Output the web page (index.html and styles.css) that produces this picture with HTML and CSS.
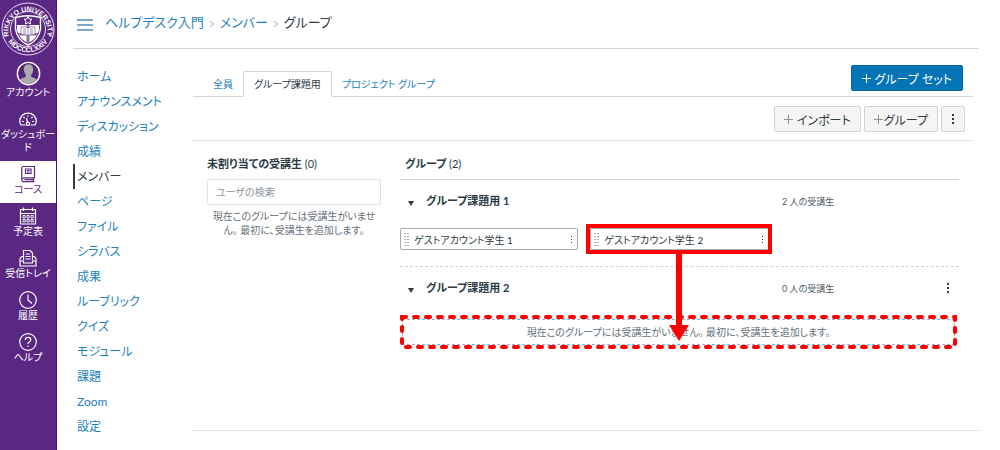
FILE: index.html
```html
<!DOCTYPE html>
<html lang="ja">
<head>
  <meta charset="UTF-8">
  <title>グループ</title>
  <link rel="stylesheet" href="styles.css">
</head>
<body>

  <!-- Global navigation -->
  <nav class="rail">
    <a href="#" class="logo" aria-label="Rikkyo University">
      <svg width="54" height="54" viewBox="0 0 54 54">
        <circle cx="27" cy="27" r="26" fill="none" stroke="#e6dcee" stroke-width="1"/>
        <circle cx="27" cy="27" r="17.500" fill="#5a2782" stroke="#e6dcee" stroke-width="1"/>
        <defs>
          <path id="arc-top" d="M7.500 32 A19.700 19.700 0 1 1 46.500 32"/>
          <path id="arc-bottom" d="M4.500 34.500 A24 24 0 0 0 49.500 34.500"/>
        </defs>
        <text class="logo-text"><textPath href="#arc-top" startOffset="50%">RIKKYO UNIVERSITY</textPath></text>
        <text class="logo-text"><textPath href="#arc-bottom" startOffset="50%">MDCCCLXXIV</textPath></text>
        <circle cx="5" cy="34" r="0.800" fill="#fff"/>
        <circle cx="49" cy="34" r="0.800" fill="#fff"/>
        <path d="M14.500 15.500 Q27 12 39.500 15.500 V27 Q38 38 27 43 Q16 38 14.500 27 Z" fill="#5a2782" stroke="#fff" stroke-width="1.400"/>
        <path d="M16 23 H38 V28 Q36.500 36.500 27 41 Q17.500 36.500 16 28 Z" fill="#fff"/>
        <path d="M25.500 23 H28.500 V41 H25.500 Z M17 31 H37 V33.500 H17 Z" fill="#8f6dab"/>
        <path d="M27 14.500 L28.200 17 L31 17.300 L29 19.200 L29.500 22 L27 20.600 L24.500 22 L25 19.200 L23 17.300 L25.800 17 Z" fill="none" stroke="#fff" stroke-width="1"/>
        <path d="M20 25 Q24 24 27 26 Q30 24 34 25 V32.500 Q30 32 27 33.500 Q24 32 20 32.500 Z" fill="#fff" stroke="#7d559d" stroke-width="0.700"/>
        <path d="M27 26 V33 M22 27 H25 M22 29 H25 M29 27 H32 M29 29 H32 M22 31 H25 M29 31 H32" stroke="#7d559d" stroke-width="0.700"/>
      </svg>
    </a>
    <a href="#" class="rail-item">
      <svg width="25" height="25" viewBox="0 0 26 26">
        <circle cx="13" cy="13" r="11.600" fill="#55247c" stroke="#fff" stroke-width="1.500"/>
        <path d="M13 3.500 C17 3.500 18.300 7 17.800 10 C17.500 12.500 16 14 15.500 15.500 C16 17.500 20.500 17 21.500 19.500 Q18 23.800 13 23.800 Q8 23.800 4.500 19.500 C5.500 17 10 17.500 10.500 15.500 C10 14 8.500 12.500 8.200 10 C7.700 7 9 3.500 13 3.500 Z" fill="#ababab"/>
      </svg>
      <span>アカウント</span>
    </a>
    <a href="#" class="rail-item">
      <svg width="18" height="18" viewBox="0 0 18 18" fill="none" stroke="currentColor" stroke-width="1.200">
        <path d="M2 15 Q0.700 13.500 0.700 11 A8.300 7.800 0 0 1 17.300 11 Q17.300 13.500 16 15 H11.500 M2 15 H6.500"/>
        <path d="M7.500 8 L8.600 12.300"/>
        <circle cx="9" cy="13.800" r="1.600"/>
        <path d="M3 11.500 H4.800 M13.200 11.500 H15 M4.500 7 L5.700 8.200 M13.500 7 L12.300 8.200 M9 5.200 V6.500"/>
      </svg>
      <span>ダッシュボード</span>
    </a>
    <a href="#" class="rail-item active">
      <svg width="18" height="18" viewBox="0 0 18 18" fill="none" stroke="currentColor" stroke-width="1.200">
        <path d="M15.500 12.800 V1.500 H4.500 Q2.800 1.500 2.800 3.200 V14.700 Q2.800 16.600 4.600 16.600 H15.500 M15.500 12.800 H4.600 Q2.800 12.800 2.800 14.700 M14.500 13 V16.500 M5.500 14.700 H14"/>
        <path d="M6.500 4 H12 V8.500 H6.500 Z M8 5.500 H10.500 M8 7 H10.500"/>
      </svg>
      <span>コース</span>
    </a>
    <a href="#" class="rail-item">
      <svg width="18" height="18" viewBox="0 0 18 18" fill="none" stroke="currentColor" stroke-width="1.200">
        <path d="M1.500 2.500 H16.500 V17 H1.500 Z M1.500 6.500 H16.500 M4.500 0.500 V4 M13.500 0.500 V4"/>
        <path d="M4 8.500 H6.200 V11 H4 Z M8 8.500 H10.200 V11 H8 Z M12 8.500 H14.200 V11 H12 Z M4 12.500 H6.200 V15 H4 Z M8 12.500 H10.200 V15 H8 Z M12 12.500 H14.200 V15 H12 Z" stroke-width="0.900"/>
      </svg>
      <span>予定表</span>
    </a>
    <a href="#" class="rail-item">
      <svg width="18" height="18" viewBox="0 0 18 18" fill="none" stroke="currentColor" stroke-width="1.200">
        <path d="M4.500 11 V1.500 H11 L13.500 4 V11 M6.500 5 H11 M6.500 7.500 H11.500 M6.500 10 H11.500"/>
        <path d="M4.500 7.500 H2.500 L1 10 V17 H17 V10 L15.500 7.500 H13.500 M1 12 H4.500 V14 H13.500 V12 H17"/>
      </svg>
      <span>受信トレイ</span>
    </a>
    <a href="#" class="rail-item">
      <svg width="18" height="18" viewBox="0 0 18 18" fill="none" stroke="currentColor" stroke-width="1.200">
        <circle cx="9" cy="9" r="8.300"/>
        <path d="M9 3.500 V9 L13 12.500"/>
      </svg>
      <span>履歴</span>
    </a>
    <a href="#" class="rail-item">
      <svg width="18" height="18" viewBox="0 0 18 18" fill="none" stroke="currentColor" stroke-width="1.200">
        <circle cx="9" cy="9" r="8.300"/>
        <path d="M6.300 7 Q6.300 4.300 9 4.300 Q11.800 4.300 11.800 6.800 Q11.800 8.200 10.300 9 Q9 9.700 9 11 M9 12.500 V14"/>
      </svg>
      <span>ヘルプ</span>
    </a>
  </nav>

  <div class="page">
    <!-- Breadcrumbs -->
    <header class="topbar">
      <button type="button" class="menu-btn" aria-label="メニュー">
        <svg width="16" height="12" viewBox="0 0 16 12"><path d="M0 1 H16 M0 6 H16 M0 11 H16" stroke="#4f8fc0" stroke-width="1.500"/></svg>
      </button>
      <a href="#">ヘルプデスク入門</a>
      <svg class="chevron" width="4" height="8" viewBox="0 0 4 8"><path d="M0.500 1 L3.500 4 L0.500 7"/></svg>
      <a href="#">メンバー</a>
      <svg class="chevron" width="4" height="8" viewBox="0 0 4 8"><path d="M0.500 1 L3.500 4 L0.500 7"/></svg>
      <span>グループ</span>
    </header>

    <div class="columns">
      <!-- Course menu -->
      <nav class="course-menu">
        <a href="#">ホーム</a>
        <a href="#">アナウンスメント</a>
        <a href="#">ディスカッション</a>
        <a href="#">成績</a>
        <a href="#" class="active">メンバー</a>
        <a href="#">ページ</a>
        <a href="#">ファイル</a>
        <a href="#">シラバス</a>
        <a href="#">成果</a>
        <a href="#">ルーブリック</a>
        <a href="#">クイズ</a>
        <a href="#">モジュール</a>
        <a href="#">課題</a>
        <a href="#">Zoom</a>
        <a href="#">設定</a>
      </nav>

      <main class="content">
        <div class="tabs">
          <a href="#" class="tab">全員</a>
          <a href="#" class="tab active">グループ課題用</a>
          <a href="#" class="tab">プロジェクト グループ</a>
          <button type="button" class="btn btn-primary">
            <svg width="9" height="9" viewBox="0 0 9 9"><path d="M4.500 0 V9 M0 4.500 H9"/></svg>
            グループ セット
          </button>
        </div>

        <div class="toolbar">
          <button type="button" class="btn">
            <svg width="9" height="9" viewBox="0 0 9 9"><path d="M4.500 0 V9 M0 4.500 H9"/></svg>
            インポート
          </button>
          <button type="button" class="btn btn-tight">
            <svg width="9" height="9" viewBox="0 0 9 9"><path d="M4.500 0 V9 M0 4.500 H9"/></svg>
            グループ
          </button>
          <button type="button" class="btn btn-icon" aria-label="オプション">
            <svg class="dots" width="2" height="10" viewBox="0 0 2 10"><path d="M0 0 H2 V2 H0 Z M0 4 H2 V6 H0 Z M0 8 H2 V10 H0 Z"/></svg>
          </button>
        </div>

        <div class="panels">
          <section class="unassigned">
            <h2>未割り当ての受講生 <span>(0)</span></h2>
            <input type="text" class="search" placeholder="ユーザの検索" aria-label="ユーザの検索">
            <p class="note">現在このグループには受講生がいません。 最初に、受講生を追加します。</p>
          </section>

          <section class="groups">
            <h2>グループ <span>(2)</span></h2>

            <div class="group">
              <div class="group-head">
                <svg class="caret" width="6" height="5" viewBox="0 0 6 5"><path d="M0 0 H6 L3 5 Z"/></svg>
                <h3>グループ課題用 1</h3>
                <span class="count">2 人の受講生</span>
              </div>
              <ul class="students">
                <li class="student">
                  <svg class="grip" width="5" height="13" viewBox="0 0 5 13"><path d="M1 0 V13 M4 0 V13"/></svg>
                  <span>ゲストアカウント学生 1</span>
                  <button type="button" class="student-menu" aria-label="操作">
                    <svg class="dots" width="1" height="7" viewBox="0 0 1 7"><path d="M0 0 H1 V1 H0 Z M0 3 H1 V4 H0 Z M0 6 H1 V7 H0 Z"/></svg>
                  </button>
                </li>
                <li class="student marked">
                  <svg class="grip" width="5" height="13" viewBox="0 0 5 13"><path d="M1 0 V13 M4 0 V13"/></svg>
                  <span>ゲストアカウント学生 2</span>
                  <button type="button" class="student-menu" aria-label="操作">
                    <svg class="dots" width="1" height="7" viewBox="0 0 1 7"><path d="M0 0 H1 V1 H0 Z M0 3 H1 V4 H0 Z M0 6 H1 V7 H0 Z"/></svg>
                  </button>
                  <svg class="arrow" width="20" height="88" viewBox="0 0 20 88"><path d="M7 0 H13 V72 H20 L10 88 L0 72 H7 Z" fill="#f00"/></svg>
                </li>
              </ul>
            </div>

            <div class="group">
              <div class="group-head">
                <svg class="caret" width="6" height="5" viewBox="0 0 6 5"><path d="M0 0 H6 L3 5 Z"/></svg>
                <h3>グループ課題用 2</h3>
                <span class="count">0 人の受講生</span>
                <button type="button" class="group-menu" aria-label="オプション">
                  <svg class="dots" width="2" height="10" viewBox="0 0 2 10"><path d="M0 0 H2 V2 H0 Z M0 4 H2 V6 H0 Z M0 8 H2 V10 H0 Z"/></svg>
                </button>
              </div>
              <div class="drop-zone">
                <p>現在このグループには受講生がいません。 最初に、受講生を追加します。</p>
                <svg class="drop-mark"><rect x="2" y="2"/></svg>
              </div>
            </div>
          </section>
        </div>
      </main>
    </div>
  </div>

</body>
</html>
```

FILE: styles.css
```css
* {
  box-sizing: border-box;
}

body {
  margin: 0;
  min-height: 100vh;
  display: flex;
  background: #fff;
  color: #2d3b45;
  font-family: Lato, "Noto Sans CJK JP", sans-serif;
  font-size: 10px;
  font-feature-settings: "palt";
}

a {
  color: #1b7fc0;
  text-decoration: none;
}

button, input {
  font: inherit;
  font-feature-settings: inherit;
}

svg {
  display: block;
  flex: none;
}

h2, h3, p, ul {
  margin: 0;
  padding: 0;
}

/* Global navigation */
.rail {
  flex: none;
  width: 57px;
  background: #5a2782;
  border-right: 1px solid #45106f;
}

.logo {
  display: flex;
  justify-content: center;
  height: 57px;
  padding-top: 2px;
}

.logo-text {
  fill: #fff;
  font-family: "Liberation Sans", sans-serif;
  font-size: 7px;
  font-weight: bold;
  text-anchor: middle;
}

.rail-item {
  display: flex;
  flex-direction: column;
  align-items: center;
  padding: 4px 0 7px;
  color: #fff;
  line-height: 13px;
  text-align: center;
}

.rail-item span {
  word-break: break-all;
}

.rail-item.active {
  background: #fff;
  color: #5a2782;
}

/* Breadcrumbs */
.page {
  flex: 1;
  padding: 0 21px 0 16px;
}

.topbar {
  display: flex;
  align-items: center;
  gap: 6px;
  height: 49px;
  padding: 0 4px 5px;
  border-bottom: 1px solid #cfd6da;
  font-size: 13px;
}

.menu-btn {
  margin-right: 6px;
  padding: 6px 0 0;
  border: none;
  background: none;
}

.chevron {
  margin-top: 4px;
  fill: none;
  stroke: #8b959e;
}

/* Course menu */
.columns {
  display: flex;
}

.course-menu {
  flex: none;
  width: 120px;
  padding-top: 15px;
  font-size: 12px;
}

.course-menu a {
  display: block;
  padding-left: 4px;
  line-height: 25px;
}

.course-menu .active {
  padding-left: 2px;
  border-left: 2px solid #2d3b45;
  color: #2d3b45;
}

/* Tabs and toolbar */
.content {
  flex: 1;
  border-bottom: 1px solid #dde1e4;
  align-self: flex-start;
  min-height: 382px;
}

.tabs {
  display: flex;
  align-items: flex-end;
  height: 48px;
  margin-right: 6px;
  padding: 0 10px;
  border-bottom: 1px solid #cfd6da;
}

.tab {
  padding: 0 10px;
  line-height: 24px;
}

.tab.active {
  margin-bottom: -1px;
  border: 1px solid #cfd6da;
  border-bottom-color: #fff;
  border-radius: 2px 2px 0 0;
  background: #fff;
  color: #2d3b45;
}

.btn {
  display: flex;
  align-items: center;
  justify-content: center;
  gap: 4px;
  height: 26px;
  padding: 0 9px;
  border: 1px solid #cfd4d8;
  border-radius: 2px;
  background: #f5f5f5;
  color: #2d3b45;
  font-size: 12px;
}

.btn svg {
  stroke: #8b959e;
}

.btn-primary {
  margin: 0 0 5px auto;
  padding: 0 10px;
  border-color: #0568a8;
  background: #0374b5;
  color: #fff;
}

.btn-primary svg {
  stroke: #fff;
}

.btn-tight {
  gap: 1px;
}

.btn-icon {
  padding: 0 10px;
}

.btn .dots,
.dots {
  fill: #2d3b45;
  stroke: none;
}

.toolbar {
  display: flex;
  justify-content: flex-end;
  gap: 3px;
  margin-right: 6px;
  padding: 9px 8px 8px;
  border-bottom: 1px solid #dde1e4;
}

/* Panels */
.panels {
  display: flex;
  gap: 19px;
  padding: 15px 20px 0 14px;
}

h2, h3 {
  font-size: 11px;
  font-weight: bold;
  line-height: 16px;
}

h2 span {
  font-weight: normal;
}

.unassigned {
  flex: none;
  width: 174px;
}

.search {
  width: 100%;
  height: 26px;
  margin-top: 7px;
  padding: 0 8px;
  border: 1px solid #dde3e8;
  border-radius: 2px;
  color: #2d3b45;
}

.search::placeholder {
  color: #8b959e;
}

.note {
  padding: 4px 3px;
  color: #64707a;
  line-height: 14px;
  text-align: center;
}

.groups {
  flex: 1;
}

.groups h2 {
  padding: 0 5px 7px;
  border-bottom: 1px solid #cfd6da;
}

.group + .group {
  border-top: 1px dashed #cfd4d8;
}

.group-head {
  display: flex;
  align-items: center;
  height: 42px;
  padding: 0 8px;
}

.caret {
  margin-top: 4px;
  fill: #2d3b45;
}

.group-head h3 {
  width: 356px;
  margin-left: 12px;
}

.count {
  color: #4f5b65;
  font-size: 9px;
}

.group-menu {
  margin-left: auto;
  padding: 2px;
  border: none;
  background: none;
}

.students {
  display: grid;
  grid-template-columns: repeat(3, 1fr);
  gap: 12px;
  padding: 6px 0 16px;
  list-style: none;
}

.student {
  position: relative;
  display: flex;
  align-items: center;
  gap: 5px;
  height: 22px;
  padding: 0 2px 0 3px;
  border: 1px solid #a3adb5;
  border-radius: 2px;
}

.student-menu {
  margin-left: auto;
  padding: 3px;
  border: none;
  background: none;
}

.grip {
  fill: none;
  stroke: #4f5b65;
  stroke-dasharray: 1 2;
}

/* Red marks drawn over the student card and the drop area */
.marked::after {
  content: "";
  position: absolute;
  inset: -5px -4px -5px -5px;
  border: 4px solid #f00;
}

.arrow {
  position: absolute;
  z-index: 1;
  top: 24px;
  left: 50%;
  margin-left: -10px;
}

.drop-zone {
  position: relative;
  margin: 10px 4px 0 2px;
  border: 1px dashed #a3adb5;
  color: #64707a;
  line-height: 24px;
  text-align: center;
}

.drop-mark {
  position: absolute;
  top: -5px;
  left: -3px;
  width: calc(100% + 6px);
  height: calc(100% + 10px);
}

.drop-mark rect {
  width: calc(100% - 4px);
  height: calc(100% - 4px);
  fill: none;
  stroke: #f00;
  stroke-width: 4px;
  stroke-linecap: round;
  stroke-dasharray: 4 8;
}
```
